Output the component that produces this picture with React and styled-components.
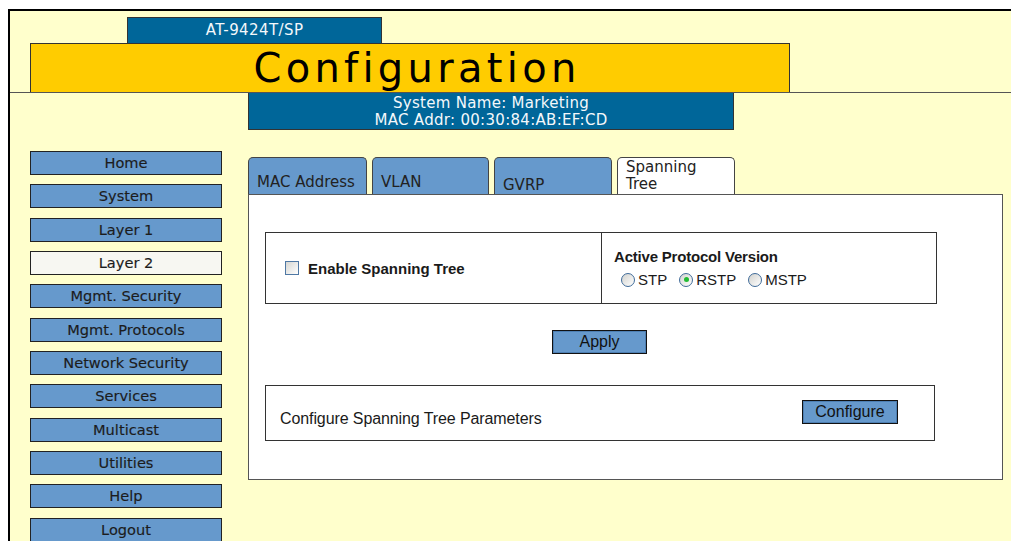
import React, { useState } from 'react';
import styled, { createGlobalStyle } from 'styled-components';

const GlobalStyle = createGlobalStyle`
  html, body {
    margin: 0;
    background: #ffffff;
  }
  body {
    padding: 9px 0 0 8px;
    overflow: hidden;
  }
`;

const Frame = styled.div`
  box-sizing: border-box;
  height: 532px;
  border-top: 2px solid #000;
  border-left: 2px solid #000;
  background: #ffffcc;
  font-family: 'DejaVu Sans', Verdana, sans-serif;
`;

const ModelTab = styled.div`
  box-sizing: border-box;
  margin: 6px 0 0 117px;
  width: 255px;
  height: 26px;
  background: #006699;
  border: 1px solid #333;
  border-bottom: none;
  color: #f4f8fb;
  font-size: 15px;
  letter-spacing: 0.4px;
  text-align: center;
  line-height: 25px;
`;

const TitleRow = styled.div`
  border-bottom: 1px solid #555;
`;

const TitleBar = styled.div`
  box-sizing: border-box;
  margin-left: 20px;
  width: 760px;
  height: 49px;
  background: #ffcc00;
  border: 1px solid #333;
  border-bottom: none;
  display: flex;
  align-items: center;
  justify-content: center;
  padding-left: 14px;
  font-size: 40px;
  letter-spacing: 4.3px;
  color: #000;
`;

const InfoBox = styled.div`
  box-sizing: border-box;
  margin-left: 238px;
  width: 486px;
  height: 37px;
  background: #006699;
  border: 1px solid #333;
  border-top: none;
  color: #f4f8fb;
  font-size: 15px;
  letter-spacing: 0.3px;
  line-height: 17px;
  text-align: center;
  padding-top: 2px;
`;

const Main = styled.div`
  display: flex;
  margin-top: 21px;
`;

const Sidebar = styled.nav`
  display: flex;
  flex-direction: column;
  gap: 9.33px;
  margin-left: 20px;
  width: 192px;
`;

const NavButton = styled.div`
  box-sizing: border-box;
  height: 24px;
  background: ${(p) => (p.$active ? '#f7f7f2' : '#6699cc')};
  border: 1px solid #222;
  color: #1c1c1c;
  font-size: 14.6px;
  line-height: 22px;
  text-align: center;
  -webkit-text-stroke: 0.15px #1c1c1c;
`;

const Content = styled.div`
  margin: 6px 0 0 26px;
  width: 755px;
`;

const TabRow = styled.div`
  display: flex;
  gap: 5px;
  height: 37px;
`;

const Tab = styled.div`
  box-sizing: border-box;
  width: ${(p) => p.$w}px;
  height: 37px;
  background: ${(p) => (p.$active ? '#ffffff' : '#6699cc')};
  border: 1px solid #444;
  border-bottom: none;
  border-radius: 5px 5px 0 0;
  display: flex;
  align-items: ${(p) => (p.$top ? 'flex-start' : 'flex-end')};
  padding: ${(p) => (p.$top ? '1px 0 0 8px' : `0 0 ${p.$pb}px 8px`)};
  color: #222;
  font-size: 15px;
  line-height: 17px;
`;

const Panel = styled.div`
  box-sizing: border-box;
  height: 286px;
  background: #fff;
  border: 1px solid #555;
  padding: 37px 0 0 16px;
  font-family: 'Liberation Sans', Arial, sans-serif;
  color: #1a1a1a;
`;

const OptionBox = styled.div`
  box-sizing: border-box;
  width: 672px;
  height: 72px;
  border: 1px solid #333;
  display: grid;
  grid-template-columns: 335px 1fr;
`;

const EnableCell = styled.label`
  display: flex;
  align-items: center;
  gap: 9px;
  padding-left: 19px;
  font-size: 15px;
  font-weight: bold;
`;

const CheckBox = styled.span`
  box-sizing: border-box;
  flex-shrink: 0;
  width: 14px;
  height: 14px;
  border: 1px solid #4f78a4;
  background: linear-gradient(135deg, #d6d6d2, #ffffff);
`;

const VersionCell = styled.div`
  border-left: 1px solid #333;
  display: flex;
  flex-direction: column;
  justify-content: center;
  gap: 6px;
  padding: 0 0 0 12px;
`;

const CellTitle = styled.div`
  font-size: 15px;
  font-weight: bold;
  letter-spacing: -0.2px;
`;

const RadioRow = styled.div`
  display: flex;
  align-items: center;
  padding-left: 7px;
  font-size: 15px;
  line-height: 17px;
`;

const RadioItem = styled.label`
  display: flex;
  align-items: center;
  gap: 3px;
  margin-right: 12px;
`;

const RadioCircle = styled.span`
  box-sizing: border-box;
  flex-shrink: 0;
  width: 14px;
  height: 14px;
  border-radius: 50%;
  border: 1px solid #3f6b99;
  background: linear-gradient(135deg, #d2d2ce, #ffffff);
  display: flex;
  align-items: center;
  justify-content: center;
  &::after {
    content: '';
    width: 5px;
    height: 5px;
    border-radius: 50%;
    background: ${(p) => (p.$on ? '#22bb33' : 'transparent')};
  }
`;

const ApplyRow = styled.div`
  width: 672px;
  display: flex;
  justify-content: center;
  margin-top: 26px;
  padding-right: 3px;
  box-sizing: border-box;
`;

const BlueButton = styled.button`
  box-sizing: border-box;
  width: ${(p) => p.$w}px;
  height: 24px;
  margin-top: ${(p) => p.$mt || 0}px;
  background: #6699cc;
  border: 1px solid #111;
  box-shadow: inset 0 0 0 1px #4d7fb3;
  font-family: 'Liberation Sans', Arial, sans-serif;
  font-size: 16px;
  color: #111;
  padding: 0;
  cursor: pointer;
`;

const ParamBox = styled.div`
  box-sizing: border-box;
  width: 670px;
  height: 56px;
  margin-top: 31px;
  border: 1px solid #333;
  display: flex;
  justify-content: space-between;
  align-items: flex-start;
  padding: 0 36px 0 14px;
`;

const ParamText = styled.div`
  margin-top: 24px;
  font-size: 16px;
  letter-spacing: -0.1px;
`;

const navItems = [
  'Home', 'System', 'Layer 1', 'Layer 2', 'Mgmt. Security', 'Mgmt. Protocols',
  'Network Security', 'Services', 'Multicast', 'Utilities', 'Help', 'Logout',
];

const tabs = [
  { label: 'MAC Address', w: 119, pb: 3 },
  { label: 'VLAN', w: 117, pb: 3 },
  { label: 'GVRP', w: 118, pb: 0 },
  { label: ['Spanning', 'Tree'], w: 118, top: true, active: true },
];

const protocols = ['STP', 'RSTP', 'MSTP'];

const App = () => {
  const [protocol, setProtocol] = useState('RSTP');

  return (
    <>
      <GlobalStyle />
      <Frame>
        <ModelTab>AT-9424T/SP</ModelTab>
        <TitleRow>
          <TitleBar>Configuration</TitleBar>
        </TitleRow>
        <InfoBox>
          System Name: Marketing
          <br />
          MAC Addr: 00:30:84:AB:EF:CD
        </InfoBox>

        <Main>
          <Sidebar>
            {navItems.map((item) => (
              <NavButton key={item} $active={item === 'Layer 2'}>
                {item}
              </NavButton>
            ))}
          </Sidebar>

          <Content>
            <TabRow>
              {tabs.map((t) => (
                <Tab key={t.w + String(t.label)} $w={t.w} $pb={t.pb} $top={t.top} $active={t.active}>
                  {Array.isArray(t.label) ? (
                    <span>
                      {t.label[0]}
                      <br />
                      {t.label[1]}
                    </span>
                  ) : (
                    t.label
                  )}
                </Tab>
              ))}
            </TabRow>

            <Panel>
              <OptionBox>
                <EnableCell>
                  <CheckBox />
                  Enable Spanning Tree
                </EnableCell>
                <VersionCell>
                  <CellTitle>Active Protocol Version</CellTitle>
                  <RadioRow>
                    {protocols.map((p) => (
                      <RadioItem key={p} onClick={() => setProtocol(p)}>
                        <RadioCircle $on={protocol === p} />
                        {p}
                      </RadioItem>
                    ))}
                  </RadioRow>
                </VersionCell>
              </OptionBox>

              <ApplyRow>
                <BlueButton $w={95}>Apply</BlueButton>
              </ApplyRow>

              <ParamBox>
                <ParamText>Configure Spanning Tree Parameters</ParamText>
                <BlueButton $w={96} $mt={14}>Configure</BlueButton>
              </ParamBox>
            </Panel>
          </Content>
        </Main>
      </Frame>
    </>
  );
};

export default App;
